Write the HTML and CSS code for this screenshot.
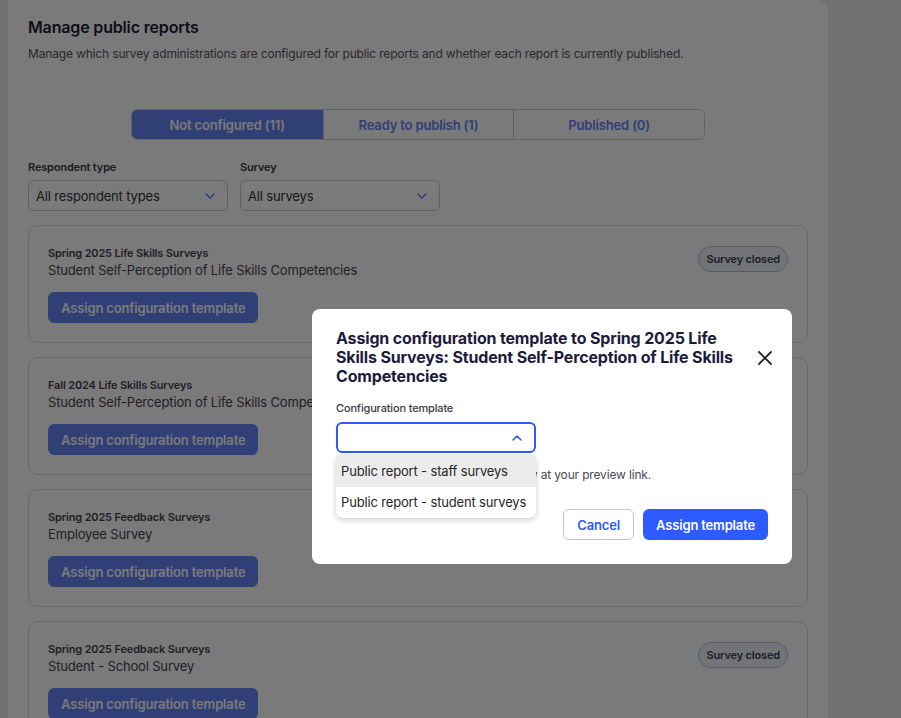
FILE: index.html
```html
<!DOCTYPE html>
<html lang="en">
<head>
<meta charset="utf-8">
<title>Manage public reports</title>
<link rel="stylesheet" href="styles.css">
</head>
<body>
<div class="page">
  <main class="panel">
    <h1 class="page-title">Manage public reports</h1>
    <p class="lead">Manage which survey administrations are configured for public reports and whether each report is currently published.</p>

    <div class="tabs" role="tablist">
      <button class="tab is-active" role="tab">Not configured (11)</button>
      <button class="tab" role="tab">Ready to publish (1)</button>
      <button class="tab" role="tab">Published (0)</button>
    </div>

    <div class="filters">
      <div class="field">
        <span class="field-label">Respondent type</span>
        <div class="select">
          <span>All respondent types</span>
          <svg class="chev" viewBox="0 0 10 6" width="10" height="6"><path d="M1 1l4 4 4-4"/></svg>
        </div>
      </div>
      <div class="field">
        <span class="field-label">Survey</span>
        <div class="select">
          <span>All surveys</span>
          <svg class="chev" viewBox="0 0 10 6" width="10" height="6"><path d="M1 1l4 4 4-4"/></svg>
        </div>
      </div>
    </div>

    <ul class="cards">
      <li class="card">
        <div class="card-body">
          <p class="card-group">Spring 2025 Life Skills Surveys</p>
          <p class="card-name">Student Self-Perception of Life Skills Competencies</p>
          <button class="btn btn-primary">Assign configuration template</button>
        </div>
        <span class="badge">Survey closed</span>
      </li>
      <li class="card">
        <div class="card-body">
          <p class="card-group">Fall 2024 Life Skills Surveys</p>
          <p class="card-name">Student Self-Perception of Life Skills Competencies</p>
          <button class="btn btn-primary">Assign configuration template</button>
        </div>
        <span class="badge">Survey closed</span>
      </li>
      <li class="card">
        <div class="card-body">
          <p class="card-group">Spring 2025 Feedback Surveys</p>
          <p class="card-name">Employee Survey</p>
          <button class="btn btn-primary">Assign configuration template</button>
        </div>
      </li>
      <li class="card">
        <div class="card-body">
          <p class="card-group">Spring 2025 Feedback Surveys</p>
          <p class="card-name">Student - School Survey</p>
          <button class="btn btn-primary">Assign configuration template</button>
        </div>
        <span class="badge">Survey closed</span>
      </li>
    </ul>
  </main>
</div>

<div class="backdrop">
  <div class="modal" role="dialog" aria-modal="true">
    <div class="modal-head">
      <h2 class="modal-title">Assign configuration template to Spring 2025 Life Skills Surveys: Student Self-Perception of Life Skills Competencies</h2>
      <button class="close" aria-label="Close">
        <svg viewBox="0 0 14 14" width="14" height="14"><path d="M1 1l12 12M13 1L1 13"/></svg>
      </button>
    </div>

    <span class="field-label modal-label">Configuration template</span>
    <div class="combo">
      <div class="select select-open">
        <span></span>
        <svg class="chev" viewBox="0 0 10 6" width="10" height="6"><path d="M1 5l4-4 4 4"/></svg>
      </div>
      <ul class="menu" role="listbox">
        <li class="menu-item is-hover">Public report - staff surveys</li>
        <li class="menu-item">Public report - student surveys</li>
      </ul>
    </div>
    <p class="hint">The report will be available to review at your preview link.</p>

    <div class="modal-actions">
      <button class="btn btn-outline">Cancel</button>
      <button class="btn btn-primary">Assign template</button>
    </div>
  </div>
</div>
</body>
</html>
```

FILE: styles.css
```css
* { box-sizing: border-box; }

:root {
  --brand: #2d5bff;
  --brand-page: #6584f6;
}

html, body {
  margin: 0;
  height: 100%;
}

body {
  font-family: Inter, "Liberation Sans", sans-serif;
  letter-spacing: -0.01em;
  color: #2b2b33;
  background: #eeeef0;
  overflow: hidden;
}

button {
  font: inherit;
  letter-spacing: inherit;
  cursor: pointer;
}

p { margin: 0; }

.page {
  display: flex;
  padding-left: 8px;
}

.panel {
  width: 820px;
  background: #ffffff;
  border-radius: 0 12px 0 0;
  padding: 15px 20px 40px;
}

.page-title {
  margin: 0;
  font-size: 16px;
  line-height: 24px;
  font-weight: 600;
  color: #22213a;
}

.lead {
  margin-top: 6px;
  font-size: 12px;
  line-height: 18px;
  color: #555560;
}

/* segmented tabs */
.tabs {
  display: grid;
  grid-template-columns: repeat(3, 1fr);
  width: 574px;
  margin: 46px auto 0;
  border: 1px solid #cfcfd4;
  border-radius: 6px;
  overflow: hidden;
}

.tab {
  height: 29px;
  border: 0;
  border-left: 1px solid #cfcfd4;
  background: #fff;
  color: var(--brand-page);
  font-size: 13px;
  font-weight: 600;
}

.tab:first-child { border-left: 0; }

.tab.is-active {
  background: var(--brand-page);
  color: #fff;
}

/* filters */
.filters {
  display: flex;
  gap: 12px;
  margin-top: 19px;
}

.field {
  display: flex;
  flex-direction: column;
  gap: 5px;
  width: 200px;
}

.field-label {
  font-size: 11px;
  line-height: 16px;
  font-weight: 600;
  color: #3a3a44;
}

.select {
  display: flex;
  align-items: center;
  justify-content: space-between;
  height: 31px;
  padding: 0 12px 0 7px;
  border: 1px solid #c9c9cf;
  border-radius: 6px;
  background: #fff;
  font-size: 13px;
  color: #333338;
}

.chev {
  fill: none;
  stroke: var(--brand-page);
  stroke-width: 1.6;
  stroke-linecap: round;
  stroke-linejoin: round;
}

/* report cards */
.cards {
  list-style: none;
  margin: 14px 0 0;
  padding: 0;
  display: flex;
  flex-direction: column;
  gap: 14px;
}

.card {
  display: flex;
  justify-content: space-between;
  align-items: flex-start;
  padding: 19px;
  border: 1px solid #d9d9de;
  border-radius: 10px;
  background: #fff;
}

.card-group {
  font-size: 11px;
  line-height: 16px;
  font-weight: 600;
  color: #45454d;
}

.card-name {
  font-size: 13px;
  line-height: 18px;
  color: #45454d;
}

.btn {
  height: 31px;
  padding: 0 13px;
  border-radius: 6px;
  font-size: 13px;
  font-weight: 600;
}

.card .btn { margin-top: 13px; }

.btn-primary {
  border: 0;
  background: var(--brand);
  color: #fff;
}

.card .btn-primary { background: var(--brand-page); }

.btn-outline {
  border: 1px solid #c4c4ca;
  background: #fff;
  color: var(--brand);
}

.badge {
  margin-top: 1px;
  height: 26px;
  display: inline-flex;
  align-items: center;
  padding: 0 7px;
  border: 1px solid #b3c2d8;
  border-radius: 13px;
  background: #eef2f8;
  font-size: 11px;
  font-weight: 600;
  color: #3e4450;
}

/* dialog */
.backdrop {
  position: fixed;
  inset: 0;
  background: rgba(0, 0, 0, 0.52);
}

.modal {
  position: absolute;
  left: 312px;
  top: 309px;
  width: 480px;
  padding: 20px 24px 24px;
  background: #fff;
  border-radius: 8px;
}

.modal-head {
  display: flex;
  align-items: center;
  gap: 12px;
}

.modal-title {
  flex: 1;
  margin: 0;
  font-size: 16px;
  line-height: 19px;
  font-weight: 700;
  color: #1d1b3c;
}

.close {
  flex: none;
  width: 28px;
  height: 28px;
  margin-right: -11px;
  padding: 0;
  border: 0;
  background: none;
  display: grid;
  place-items: center;
}

.close svg {
  stroke: #222228;
  stroke-width: 1.8;
  stroke-linecap: round;
}

.modal-label {
  display: block;
  margin-top: 14px;
  font-weight: 500;
}

.combo {
  position: relative;
  width: 200px;
  margin-top: 6px;
}

.select-open {
  border: 2px solid var(--brand);
}

.select-open .chev { stroke: var(--brand); }

.menu {
  position: absolute;
  left: 0;
  right: 0;
  top: 33px;
  margin: 0;
  padding: 0;
  list-style: none;
  background: #fff;
  border-radius: 6px;
  box-shadow: 0 2px 6px rgba(0, 0, 0, 0.18), 0 0 1px rgba(0, 0, 0, 0.2);
  overflow: hidden;
  z-index: 2;
}

.menu-item {
  height: 31.5px;
  display: flex;
  align-items: center;
  padding: 0 5px;
  font-size: 13px;
  white-space: nowrap;
  color: #26262c;
}

.menu-item.is-hover { background: #ebebeb; }

.hint {
  margin-top: 13px;
  font-size: 12px;
  line-height: 18px;
  color: #4a4a52;
}

.modal-actions {
  display: flex;
  justify-content: flex-end;
  gap: 9px;
  margin-top: 25px;
}
```
